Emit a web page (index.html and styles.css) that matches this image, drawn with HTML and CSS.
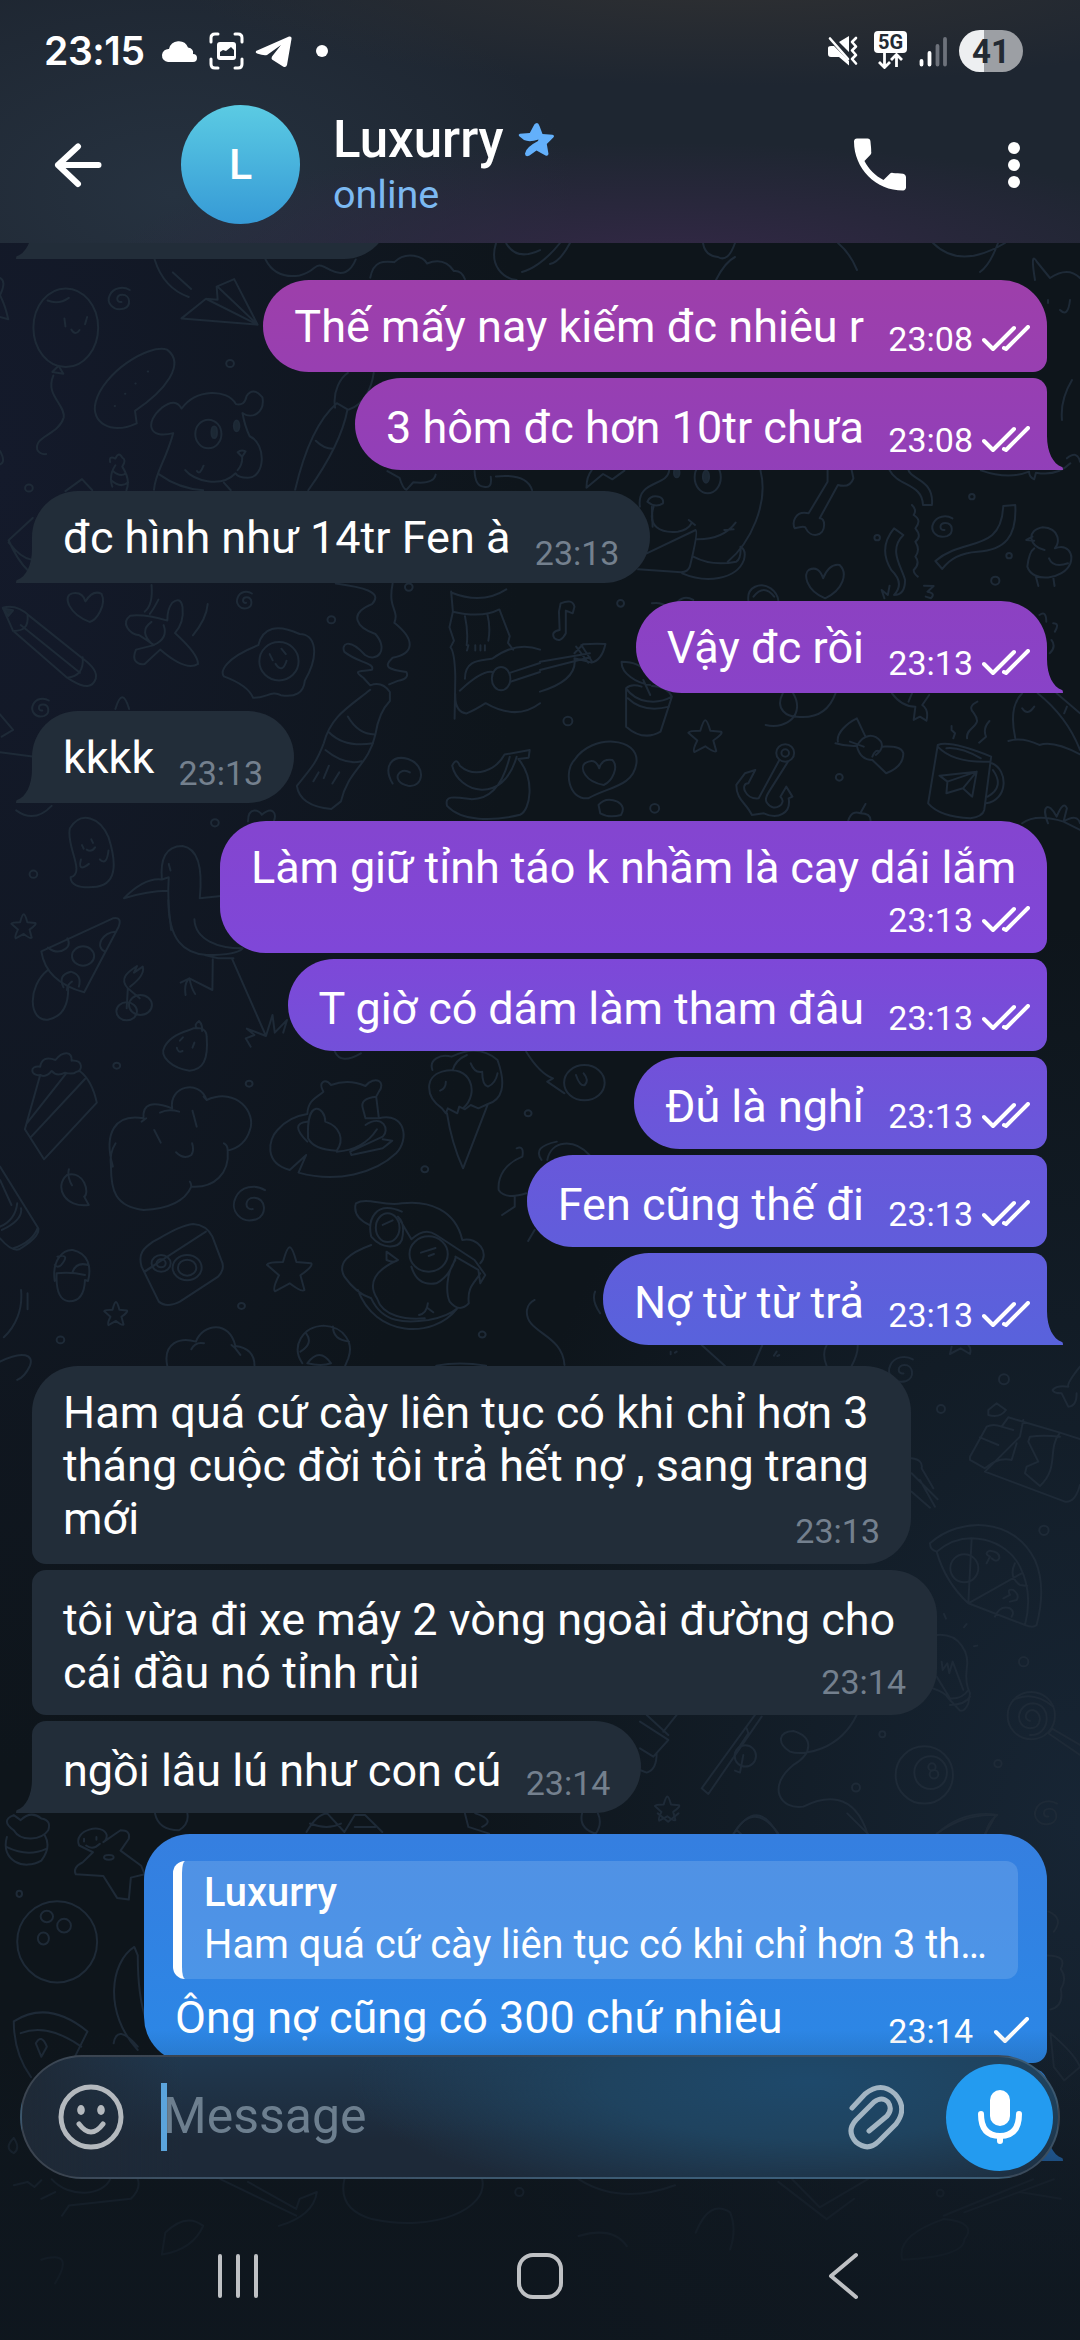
FILE: index.html
```html
<!DOCTYPE html>
<html lang="vi">
<head>
<meta charset="utf-8">
<title>Luxurry</title>
<link rel="stylesheet" href="styles.css">
</head>
<body>
<div class="screen">
  <svg class="wallpaper" viewBox="0 0 1080 2340" aria-hidden="true">
    <defs>
      <path id="star" vector-effect="non-scaling-stroke" d="M0-17Q2-17 5-6L16-5Q18-3 8 4L11 15Q9 17 0 10L-11 16Q-13 14-8 4L-17-4Q-16-6-5-6Q-2-17 0-17Z"/>
      <path id="swirl" d="M2 3C-5 4-5-6 3-6C13-6 14 8 5 11C-8 15-17 4-12-6C-8-15 4-17 12-12"/>
      <circle id="dot" r="4"/>
    </defs>
    <g transform="translate(0 230) scale(.3444 .4464)">
      <ellipse cx="191" cy="219" rx="94" ry="88"/>
      <path d="M138 158Q170 168 200 152M187 198L190 216M253 195L247 211M207 223Q219 238 231 224M152 318L170 304L184 322ZM155 326C130 370 190 390 185 420C170 460 100 460 108 492Q115 503 134 502"/>
      <path d="M527 198L598 154L632 156L629 127L680 110L748 212ZM598 154L748 212L632 127M449 66Q475 130 548 150M502 95L555 132M771 66Q800 110 870 102C930 90 905 65 960 90Q1010 110 1033 66M1075 107C1085 65 1120 70 1145 72C1180 45 1230 60 1240 75Q1290 60 1318 92Q1340 90 1350 110M1440 30C1420 80 1460 108 1500 112M1470 30Q1500 70 1568 45M0 107Q20 115 0 146Q15 168 24 200L0 195M0 495Q18 520 0 525"/>
      <path d="M397 433C320 460 262 430 278 385C300 320 430 255 485 268C540 300 480 360 392 405ZM429 317h1M393 344h1M363 367h1M333 394h1"/>
      <path d="M447 582C452 540 480 520 503 455C430 470 420 430 470 398Q510 375 527 400C570 355 660 355 685 390Q710 395 716 372Q735 350 762 375C770 410 730 425 704 410Q711 440 725 462C775 480 770 555 720 555Q690 555 684 545C640 580 560 560 538 538M461 547Q520 580 590 583M572 540Q580 550 591 528M690 498Q700 491 713 496L703 508ZM703 508Q705 525 690 538M650 566L670 583"/>
      <ellipse cx="605" cy="457" rx="38" ry="32"/><ellipse class="solid" cx="622" cy="453" rx="8" ry="13"/><ellipse class="solid" cx="687" cy="439" rx="8" ry="12"/>
      <path d="M320 520Q315 505 335 512Q345 495 355 510Q368 515 355 530Q380 560 367 583M335 527Q315 550 326 575M328 540Q350 555 365 545M322 560Q350 580 372 565M190 585L238 558L268 583M95 645L25 695Q50 740 84 765M25 700Q60 735 90 738"/>
      <path d="M857 582Q900 440 978 388L1009 402Q990 480 895 583M917 472Q940 490 967 490M973 398C965 360 990 330 1010 320M1013 402C1060 390 1080 350 1085 320M1125 540L1160 555Q1170 580 1180 582L1200 565Q1260 570 1265 548M1378 540Q1380 575 1405 575Q1430 580 1425 553M1440 552Q1530 545 1545 583"/>
      <path d="M8 846Q50 838 86 865L240 960Q285 985 278 1005Q265 1035 210 1010L195 1003L38 898ZM37 898Q85 900 80 863M60 885L232 992M195 1003Q245 1000 240 957"/><path class="solid" d="M9 848L38 852L24 865Z"/>
      <path d="M260 878C200 860 180 820 210 814Q240 810 248 832Q270 805 295 815C310 840 280 875 260 878ZM378 864C350 880 375 905 405 908Q430 920 447 930L395 940C380 965 400 975 420 972L465 940Q540 990 575 972Q575 950 508 903Q535 880 530 845Q525 820 500 835Q485 850 486 875Q420 860 378 864ZM440 878Q400 900 445 930Q490 915 475 885M420 855Q445 840 440 795M435 860Q445 850 460 828M560 908Q600 870 603 838"/>
      <path d="M750 930C650 960 640 990 650 1000Q720 1020 735 1048C770 1050 790 1030 815 1042Q880 1050 885 1010C930 950 915 905 870 905Q770 870 750 930Z"/><ellipse cx="810" cy="966" rx="57" ry="43"/><path d="M783 950L792 964M817 938L830 950M800 972Q820 995 832 965"/>
      <path d="M975 792C1050 800 1115 810 1080 838C1010 860 1035 890 1090 905C1130 940 1095 970 1060 952C1010 910 990 930 1000 945C1040 970 1090 970 1080 985C1050 990 1020 985 1055 1003L1075 1020Q1110 1010 1132 1035V1055Q1100 1080 1090 1130C1070 1200 1010 1210 990 1280L962 1297Q870 1290 862 1245C910 1200 920 1190 940 1150C960 1090 1010 1070 1075 1030M1140 792C1125 850 1160 850 1145 880C1210 920 1200 950 1140 958C1110 980 1130 985 1180 990Q1190 1005 1155 1010L1130 1018M1010 1090Q1040 1130 1088 1130M955 1125Q1000 1160 1083 1150M945 1165Q1000 1200 1050 1190M925 1215L910 1235M955 1200L940 1228M985 1215L965 1240"/>
      <path d="M1310 810L1315 855L1305 890L1318 920L1308 935Q1320 945 1322 1000L1320 1095M1315 855Q1400 870 1450 850L1465 880L1480 910L1475 925L1490 940M1310 812Q1400 840 1470 805M1350 865Q1360 900 1355 930M1415 860Q1425 890 1418 920M1360 930l-4 12M1380 930v12M1395 930v12M1408 930v12M1322 1040Q1320 1080 1355 1083Q1380 1075 1410 1060Q1500 1100 1568 1060M1350 1005C1350 960 1400 965 1430 960Q1500 920 1568 940M1335 1032Q1400 985 1430 990M1480 992L1568 970M1482 1012L1568 990"/>
      <ellipse cx="1455" cy="1005" rx="27" ry="26"/>
      <path d="M1313 1200Q1325 1180 1335 1200C1380 1230 1440 1210 1465 1175L1538 1165L1535 1182L1505 1185C1555 1230 1540 1300 1510 1310C1430 1325 1340 1325 1298 1290C1290 1265 1320 1270 1370 1275Q1450 1275 1480 1180M1313 1200C1330 1260 1460 1290 1500 1180M1140 1240C1110 1200 1140 1175 1185 1185C1240 1200 1230 1250 1185 1245C1130 1235 1160 1200 1190 1215"/>
      <path d="M205 1450C250 1440 190 1380 203 1340C235 1300 290 1315 315 1360C340 1420 340 1470 270 1472Q205 1475 205 1450ZM265 1365l5 8M238 1378l5 8M252 1388Q265 1395 276 1383M235 1410Q225 1440 258 1420M290 1410Q310 1425 315 1390M0 1085L38 1120L5 1135M0 1170Q50 1175 100 1180M47 1300Q100 1330 150 1290M335 1073Q355 1020 375 1073M720 1325C720 1290 755 1300 760 1310C790 1290 805 1305 795 1325"/>
      <path d="M360 1497Q420 1450 470 1455C465 1410 480 1380 530 1380C570 1385 590 1420 580 1497L642 1492M360 1497Q430 1480 487 1480M470 1455L490 1450Q485 1500 497 1568M490 1420l5 15"/>
      <use href="#dot" transform="translate(668 299) scale(2.8 2)"/><use href="#dot" transform="translate(84 578) scale(2.8 2)"/><use href="#dot" transform="translate(962 873) scale(2.8 2)"/><use href="#dot" transform="translate(1187 800) scale(2.8 2)"/><use href="#dot" transform="translate(624 1328) scale(2.8 2)"/><use href="#dot" transform="translate(97 1443) scale(2.8 2)"/>
      <use href="#swirl" transform="translate(348 156) scale(2.4 1.8)"/><use href="#swirl" transform="translate(711 831) scale(1.7 1.4)"/><use href="#swirl" transform="translate(119 1072) scale(1.9 1.5)"/>
    </g>
    <g transform="translate(0 900) scale(.3827 .3333)">
      <path d="M108 154L295 55Q320 50 310 80L220 277Q120 245 108 154ZM125 143Q150 165 172 146Q185 135 176 115M302 95C270 95 245 140 275 155M125 210C70 260 75 365 125 359C165 350 180 310 178 258"/><circle cx="217" cy="168" r="29"/><path d="M166 262Q150 225 185 215Q215 225 206 260M175 270Q175 255 188 245"/>
      <circle cx="331" cy="334" r="27"/><circle cx="367" cy="315" r="30"/><path d="M331 325L334 265L365 295M334 265C310 235 335 215 358 198L350 218L373 200Q380 225 340 260"/>
      <path d="M440 0C440 120 480 160 540 165Q620 165 634 145C570 145 510 120 508 58M535 165L570 175L610 175M556 178L555 270L495 235L472 248M495 235Q480 250 485 285M495 235Q500 265 510 282M607 178L695 408L712 345L718 398L750 360L740 398M695 408L645 386L665 405L642 415L655 440"/>
      <path d="M430 440C450 400 490 395 505 385Q540 380 540 410C545 480 530 510 495 512C450 505 415 470 430 440ZM515 385Q505 375 520 363Q530 375 528 393M478 412l-8 10M508 428l-5 15M462 443Q465 460 477 453"/>
      <path d="M105 525L65 688L115 778L253 608Q240 540 208 513M105 525C80 530 75 495 105 500Q110 465 145 480C165 450 190 455 187 482C220 480 215 515 200 515Q190 525 170 518C150 530 140 520 135 513Q120 535 105 525M70 670L172 522M80 712L222 537"/>
      <path d="M295 800C270 700 300 640 375 655Q370 590 450 625C440 560 520 535 540 600C620 560 670 640 653 690Q640 740 595 752C600 820 560 865 500 860Q475 925 375 930C300 920 290 870 290 800Q285 760 302 730M382 655L370 665M418 638Q440 625 468 635M403 690L420 728M503 632L514 680M460 757Q480 780 500 765Q508 750 502 730M540 600L532 590M595 752Q595 735 585 730M500 860Q500 850 496 845"/>
      <path d="M0 800L100 985Q105 1010 50 1048Q30 1055 0 1015M0 840L30 915M45 910Q40 960 0 980M55 925Q60 960 5 990M98 985Q85 1025 35 1045M180 808Q175 830 188 856M175 825C220 810 235 880 220 890L232 915C170 925 140 860 175 825"/>
      <path d="M143 1143C135 1080 165 1048 190 1050C230 1060 240 1100 230 1143L222 1140Q220 1205 180 1204Q145 1200 148 1120Q185 1115 222 1125M190 1115Q200 1085 230 1095M150 1070Q185 1060 160 1095Q150 1105 143 1095M55 1170C60 1230 40 1280 10 1312M72 1180V1228M0 1385C60 1350 90 1365 78 1398Q65 1430 45 1440"/>
      <path d="M370 1100C360 1060 375 1045 400 1025C440 1000 475 975 505 972Q540 975 555 1010L578 1080Q590 1105 570 1130L470 1205Q435 1225 415 1205ZM378 1114L538 995M380 1114L405 1095"/><circle cx="421" cy="1090" r="25"/><circle cx="421" cy="1090" r="12"/><circle cx="489" cy="1103" r="38"/><circle cx="489" cy="1103" r="24"/>
      <path d="M845 575C830 545 850 535 865 555Q910 535 955 558C980 525 1010 545 990 575L983 590L990 655C1060 635 1070 720 1035 760C980 820 880 850 780 818L800 765L757 810C690 790 700 720 725 690Q755 650 803 642C805 600 825 595 845 575ZM805 715C800 590 850 620 850 665C890 680 900 720 880 752Q820 750 805 715ZM983 590Q940 595 948 625L955 655H990M880 755Q950 750 985 688M955 675C1000 640 1020 690 1000 710L915 755L918 765L1000 745L1025 722L1000 718M803 665Q755 670 803 725"/>
      <path d="M1130 510C1120 480 1150 460 1180 470Q1250 430 1300 480C1325 560 1310 600 1275 612L1250 625L1230 615L1215 628L1200 620L1195 640L1170 625L1165 640L1155 625C1110 590 1110 530 1155 515C1230 490 1255 580 1210 625M1168 640Q1180 730 1210 805L1275 612M1183 510Q1190 480 1220 465M1230 490Q1240 520 1260 515Q1260 555 1275 560Q1295 550 1300 520M1150 572Q1165 565 1165 545M1375 455Q1410 520 1445 535L1430 545L1475 580M875 455Q890 495 943 460"/>
      <path d="M965 975Q920 950 930 910C960 890 1000 920 1050 910C1120 900 1190 930 1208 1020C1250 1010 1280 1060 1255 1090M1050 935C980 900 960 960 970 1010C1000 1050 1040 1045 1050 1020Q1060 970 1040 950L1075 1018Q1110 980 1140 1005L1240 1080L1268 1125L1255 1150L1250 1110L1190 1070M970 1035C910 1060 880 1090 900 1130Q930 1180 970 1195C1000 1270 1060 1270 1120 1260Q1170 1250 1195 1225M1040 1080C980 1110 960 1150 985 1195C1000 1250 1060 1260 1110 1255M935 1170C980 1310 1130 1320 1195 1225M1190 1080C1165 1120 1165 1180 1175 1205Q1200 1240 1225 1210C1220 1160 1240 1150 1255 1120M1010 1055L1040 1080Q1030 1090 1010 1080ZM1075 1100Q1090 1160 1140 1150Q1175 1130 1190 1075M1118 1210Q1115 1240 1095 1245M1118 1225L1132 1237"/>
      <ellipse cx="1120" cy="1062" rx="50" ry="53"/><ellipse cx="1013" cy="983" rx="31" ry="43"/><path d="M1100 1058l38-14M1000 975l26-14M1120 1068l14-6"/>
      <path d="M1430 780C1440 720 1500 715 1540 765M1415 780Q1390 740 1455 725M1350 745Q1370 735 1365 770C1320 790 1300 830 1303 870Q1320 900 1375 880M1345 890V920L1312 945M1380 1023L1397 990M1475 1395C1470 1300 1370 1300 1377 1230Q1380 1210 1397 1200M1140 1397Q1200 1385 1270 1397M1555 1175Q1545 1200 1568 1240"/>
      <path d="M437 1397C425 1330 470 1310 512 1325C530 1270 600 1260 615 1338Q665 1345 665 1397M500 1348Q510 1325 533 1330M605 1335L615 1345L628 1365M790 1390C760 1340 790 1280 845 1277C900 1280 925 1330 910 1375L902 1397M800 1300Q820 1330 785 1355M870 1280Q870 1320 912 1325M803 1390Q835 1340 865 1390Q840 1400 803 1390"/>
      <circle cx="1527" cy="548" r="53"/><path d="M1505 525Q1515 560 1528 555Q1540 540 1525 520"/>
      <use href="#star" transform="translate(62 80) scale(1.9 2.2)"/><use href="#star" transform="translate(757 1110) scale(3.5 4)"/><use href="#star" transform="translate(303 1242) scale(1.8 2.1)"/>
      <use href="#swirl" transform="translate(654 916) scale(3.2 3.8)"/>
      <g><circle cx="305" cy="497" r="9"/><circle cx="651" cy="551" r="9"/><circle cx="1110" cy="808" r="9"/><circle cx="631" cy="1218" r="9"/><circle cx="158" cy="1320" r="10"/><circle cx="1260" cy="1304" r="9"/><circle cx="1380" cy="640" r="9"/></g>
    </g>
    <g transform="translate(540 440) scale(.3444 .3333)">
      <path d="M135 143Q135 110 150 91M135 143L183 102L210 118L245 92M375 91C370 140 280 120 290 200M330 200C310 260 350 280 400 275Q430 270 440 250M432 240L450 255M640 91C665 190 610 310 545 365M453 298Q530 300 568 248M535 270L562 268M310 340L452 270Q460 275 435 380Q430 395 410 397L285 388M445 350Q500 380 570 365Q585 355 582 320Q600 330 592 360C570 420 480 430 413 400"/>
      <path d="M312 185Q320 165 345 170Q360 175 357 190Q335 205 312 185M325 200L327 260"/><ellipse cx="487" cy="112" rx="38" ry="48"/><ellipse class="solid" cx="482" cy="110" rx="9" ry="18"/><ellipse class="solid" cx="397" cy="98" rx="8" ry="14"/>
      <path d="M835 91V125L780 220C740 210 730 250 740 265Q770 255 772 265C785 295 825 290 825 255Q825 235 812 235L865 135Q900 145 910 115L905 91M1015 91C1040 140 1110 130 1112 195H1138C1145 120 1080 120 1070 91M1345 198L1380 195C1385 290 1350 330 1270 335Q1200 340 1168 387L1148 363C1230 290 1340 340 1345 198ZM1028 265L1055 285C1010 330 1050 380 1060 420Q1060 465 1028 465Q1060 430 1020 390C990 340 1000 300 1028 265ZM1080 195Q1095 210 1085 225Q1110 240 1090 265Q1110 290 1090 305Q1105 330 1090 350Q1105 370 1085 390Q1085 400 1097 410M1015 437L1010 465L992 450L1000 475M1115 437L1143 438L1125 455Q1150 460 1135 475L1120 470"/>
      <path d="M1465 330C1420 320 1410 270 1460 262C1510 265 1510 310 1495 325C1530 310 1550 340 1540 370C1520 420 1430 430 1415 380Q1420 335 1435 325M1435 302L1412 300L1430 290M1478 355Q1490 385 1533 370M1440 410L1447 438M1490 410L1494 438M1280 91Q1360 120 1420 95Q1420 110 1435 118L1440 98Q1500 110 1540 70M1530 55Q1560 30 1568 65"/>
      <path d="M828 475C770 450 765 400 780 390Q810 375 822 415Q840 370 870 375C895 400 880 450 828 475ZM605 482C600 440 640 425 670 445Q690 460 692 482M620 470Q650 430 680 470M55 515L60 490Q95 475 100 500L95 520L75 512V580Q60 610 42 595Q30 575 57 570ZM100 640L125 613Q160 610 190 612Q180 660 150 668L100 655Q110 720 0 755M0 665L145 640M0 690L145 652M105 620l35 48M120 615l30 48M325 490Q350 485 370 500M400 485Q420 465 445 480"/>
      <path d="M320 735C280 730 235 700 237 665Q290 665 310 700M320 765L300 720M250 745V860Q300 905 350 875L383 770Q370 740 325 738M250 745C280 790 340 795 383 770M255 775Q300 820 375 800M250 745Q265 730 295 740M705 760C680 810 720 830 745 830Q830 840 858 760M735 760C770 820 720 870 655 855M1022 760Q1050 800 1090 800L1085 840L1103 830L1122 842Q1130 810 1110 795L1130 765M1070 785L1080 760"/>
      <path d="M865 905C860 880 890 850 920 835L945 890M900 905L940 920M858 910Q890 920 920 918M920 918C940 880 970 880 990 905Q1000 925 975 945M920 918Q930 960 965 960L1005 1000Q1055 980 1055 940C1050 915 1010 920 995 920M965 950Q975 925 985 935"/>
      <circle cx="712" cy="939" r="26"/><circle cx="712" cy="939" r="11"/><path d="M695 960L635 1075C595 1080 580 1030 605 1030L625 990L595 1000L570 1035C570 1080 600 1090 615 1125L650 1120C690 1140 730 1120 722 1075L733 1070L715 1040L698 1070C720 1090 680 1120 660 1090Q650 1080 665 1055L720 965"/>
      <path d="M1155 915Q1190 900 1310 950L1290 1110Q1285 1130 1250 1135Q1160 1130 1127 1090ZM1155 920Q1200 970 1308 965M1180 925Q1220 920 1280 955M1312 970C1360 990 1360 1080 1295 1090M1315 990Q1350 1040 1300 1070M1160 1007L1268 995L1255 1070L1228 1045L1180 1060L1183 1025ZM1183 1025L1268 995L1228 1045M1200 895L1205 880L1195 870V858M1240 895C1235 860 1290 860 1260 820Q1240 800 1270 785M1275 908L1295 890Q1285 865 1305 843M1380 895Q1360 800 1400 760M1400 805Q1415 830 1435 800M1360 903Q1400 890 1450 915Q1490 900 1568 943M1445 760Q1530 830 1568 930M1530 800l-8 20M1568 820L1500 760"/>
      <path d="M140 1075C80 1080 70 990 100 960C150 880 290 890 280 970C270 1040 200 1040 140 1075ZM185 1035C130 1025 115 985 130 970Q160 950 172 985Q180 955 210 960C230 980 210 1025 185 1035ZM170 1095Q190 1070 225 1085Q250 1100 235 1125Q200 1135 175 1120ZM895 1142Q905 1110 930 1120L945 1092M930 1120Q960 1120 960 1142M1475 1150C1455 1100 1475 1080 1500 1130Q1520 1080 1530 1105L1520 1145Q1560 1120 1568 1150M1400 1150Q1440 1120 1520 1145L1568 1170M1450 525Q1470 510 1470 545M1490 550Q1510 550 1495 575M1480 640Q1500 620 1485 600"/>
      <use href="#swirl" transform="translate(1170 263) scale(2.3)"/><use href="#star" transform="translate(480 890) scale(2.9)"/>
      <circle cx="234" cy="490" r="10"/><circle cx="81" cy="843" r="13"/><circle cx="333" cy="1105" r="13"/><circle cx="869" cy="1012" r="10"/><circle cx="979" cy="293" r="8"/><circle cx="1254" cy="170" r="8"/><circle cx="1362" cy="347" r="8"/><circle cx="1322" cy="422" r="12"/>
    </g>
    <path d="M560 243C545 262 530 270 522 272M570 243Q560 262 550 264M703 243Q705 256 718 257Q728 263 735 243M735 257Q725 262 716 280M838 243Q850 253 857 270M933 243Q960 270 1005 243M998 243Q990 265 980 272M1035 280Q1030 250 1037 262L1050 278Q1068 266 1080 278M1048 300v3M1060 310Q1068 318 1070 300M1072 380Q1060 400 1062 420"/>
    <g transform="translate(640 1340) scale(.3333)">
      <path d="M185 15L255 78M340 78L367 15M560 78Q545 40 560 15M635 78Q655 40 653 15M92 35v8M105 38l5-3M410 35l-8 12M418 45l-6 3M930 42L935 20M930 42L962 25L990 42Q995 25 985 15M1320 80Q1280 130 1285 140Q1250 135 1238 150Q1240 160 1265 160L1285 200Q1310 200 1310 160"/>
      <path d="M1105 232L1260 278L1320 297M1105 232L1085 260Q1060 250 1040 260L990 350V360L1035 385M1085 260L1120 270M1150 240L1140 290L1035 395L1275 485Q1305 490 1320 435M1020 292L1075 315M1045 210L1070 190L1098 210Q1080 235 1045 225ZM1260 278C1220 330 1260 380 1200 438L1155 400L1160 380L1195 365L1165 305L1170 290Q1210 285 1260 290M1035 385Q1075 350 1115 360L1130 310"/>
      <path d="M870 610C960 530 1120 530 1185 660Q1220 740 1190 855Q1180 865 1155 855L985 790C920 730 900 670 890 635Q870 630 870 610ZM890 635C980 560 1100 600 1140 680Q1180 760 1155 855M995 598L985 790L1145 700M1065 830Q1080 795 1110 805Q1125 815 1115 830M1125 670Q1105 710 1140 735L1162 738M1040 670L1050 650Q1030 640 1050 632Q1080 635 1078 655Q1070 670 1055 655M1090 775L1110 765Q1100 745 1120 750Q1140 765 1130 780L1110 785"/><circle cx="973" cy="685" r="42"/>
      <path d="M892 885C960 880 990 940 980 990Q975 1030 990 1060L985 1090Q975 1115 960 1112L925 1075Q920 1060 878 1045M890 1010L930 1075M905 965L908 990L922 970L928 1000L938 965L970 1050M925 1075Q965 1080 985 1050M930 1095Q975 1095 990 1070M912 822l6 14M980 852l-8 10M1012 917l-10 2"/>
      <circle cx="1174" cy="1127" r="71"/><path d="M1170 1143C1150 1140 1155 1110 1180 1110C1210 1120 1205 1165 1170 1165C1120 1160 1130 1090 1180 1090C1240 1095 1230 1190 1170 1185M1120 1080Q1180 1050 1240 1100M1235 1165L1320 1215M1225 1180L1320 1245M1225 1180L1238 1165"/>
      <circle cx="853" cy="1305" r="86"/><circle cx="872" cy="1298" r="49"/><circle cx="876" cy="1281" r="11"/><circle cx="882" cy="1303" r="13"/>
      <path d="M650 1125C600 1230 490 1250 450 1235C410 1210 415 1175 460 1173C520 1190 520 1240 460 1275C380 1340 420 1410 490 1400C550 1370 640 1350 683 1482M281 1482Q350 1370 413 1482M290 1470Q295 1475 303 1482M890 1482Q970 1410 1072 1425Q1040 1450 1038 1482M345 1125L185 1345L205 1362L365 1130M320 1165L325 1180L285 1240M0 1145L85 1200L40 1250L0 1225M20 1125L85 1185M110 1125L70 1175M50 1240Q50 1290 20 1298L0 1290M815 355Q850 360 845 385L880 445M815 400L893 478M840 420L885 500M815 455L870 503"/><circle cx="316" cy="1248" r="32"/><path d="M310 1245L300 1298L285 1292"/>
      <use href="#swirl" transform="translate(785 92) scale(2.8)"/><use href="#swirl" transform="translate(1220 1422) scale(2.6)"/><use href="#star" transform="translate(82 1407) scale(2.2)"/>
      <circle cx="1092" cy="118" r="15"/><circle cx="903" cy="207" r="12"/><circle cx="1212" cy="571" r="14"/><circle cx="1151" cy="965" r="14"/><circle cx="727" cy="1183" r="9"/><circle cx="1074" cy="1271" r="11"/><circle cx="648" cy="1343" r="12"/>
    </g>
    <g transform="translate(0 1810) scale(.6888 .3381)">
      <path d="M20 60Q0 30 20 15L30 30Q45 0 60 25Q75 30 70 60C60 90 30 95 20 60M10 80C0 150 35 180 60 150Q75 110 65 75M10 110Q40 140 67 115M225 10Q230 60 260 60Q275 40 272 10M445 65C455 30 465 10 475 10L500 65M450 40Q475 60 495 40M500 65L515 15L530 15L555 65M515 50H545M675 10L680 50L710 70M690 10Q720 30 700 50M845 10Q840 55 865 70Q875 40 868 10M955 10L970 35L985 10M1065 70Q1095 -30 1130 70M1360 70Q1400 10 1445 15Q1440 40 1430 70M1230 10L1260 70"/>
      <path d="M115 105C105 60 150 35 155 75Q155 90 150 95L175 60Q190 60 187 85L175 120L205 165L210 190L190 200L187 265L170 260L150 195L110 190Q105 170 120 155L135 125Z"/><circle cx="158" cy="140" r="7"/><path d="M122 85v8M140 80v8M125 105Q135 120 145 100"/>
      <ellipse cx="83" cy="390" rx="58" ry="120"/><ellipse cx="68" cy="315" rx="9" ry="17"/><ellipse cx="93" cy="342" rx="10" ry="20"/><ellipse cx="63" cy="380" rx="8" ry="18"/>
      <path d="M20 625Q70 560 127 655L105 745M20 625Q20 720 45 790M30 660Q70 630 118 700M52 690Q60 660 68 700L60 730ZM165 690Q170 630 200 700M200 710C150 600 160 450 195 405L200 430Q200 550 212 620M1522 300Q1545 320 1530 360M1520 430Q1550 430 1540 470Q1550 500 1540 530Q1545 580 1525 590M1525 660Q1560 720 1568 760L1545 800L1530 760Z"/>
      <path d="M20 970Q5 1000 20 1015Q30 1000 20 970M20 1110L40 1100L50 1115L60 1095M75 1092C100 1150 150 1140 160 1092M60 1150L80 1130M90 1200L100 1170L190 1150Q205 1120 200 1092M320 1092L430 1200M360 1100L430 1180L435 1150L460 1130Q455 1200 405 1230M500 1092Q490 1180 540 1210C630 1250 710 1180 700 1092M840 1092Q900 1170 980 1110M1150 1092L1190 1175L1260 1092M1130 1100L1200 1210L1240 1150M1370 1200L1500 1092M1400 1190L1530 1092M1480 1130L1540 1150M240 1250Q270 1190 295 1230Q280 1300 235 1315ZM1010 1250Q1030 1150 1060 1190Q1070 1240 1060 1300M1310 1330Q1300 1260 1370 1210Q1420 1220 1400 1270Q1400 1320 1310 1330M840 1260Q890 1230 910 1290M60 1330Q110 1300 80 1400"/>
      <ellipse cx="754" cy="1130" rx="6" ry="12"/><ellipse cx="28" cy="248" rx="4" ry="9"/><ellipse cx="1365" cy="1133" rx="5" ry="10"/>
    </g>
  </svg>

  <header class="header">
    <div class="status">
      <span class="clock">23:15</span>
      <svg class="st-cloud" viewBox="161 40 37 22" width="37" height="22"><path fill="#fff" d="M168 62a6.500 6.500 0 0 1 1-13a10 10 0 0 1 19-1.500q6 1 5 6.500a4 4 0 0 1 0 8z"/></svg>
      <svg class="st-shot" viewBox="208 33 37 38" width="37" height="38"><g fill="none" stroke="#fff" stroke-width="3" stroke-linecap="round"><path d="M211 43v-4q0-4 4-4h3M235 35h3q4 0 4 4v4M242 60v5q0 4-4 4h-3M218 69h-3q-4 0-4-4v-5"/></g><rect x="217" y="43" width="19" height="18" rx="3" fill="#fff"/><path fill="#202a35" d="M220 57v-4l3-2 3 1 5-4 3 3v6z"/></svg>
      <svg class="st-plane" viewBox="255 36 38 33" width="38" height="33"><path fill="#fff" d="M256 52L289 37.500q3-.5 2.500 2.500L287 66q-1 3-4 1.500L272 60.500q-1-1 0-3L281 46L267 56Q264 57 257 54.500Q255 53.500 256 52z"/></svg>
      <i class="st-dot"></i>
      <svg class="st-mute" viewBox="827 36 31 31" width="31" height="31"><path fill="#fff" d="M828 48q0-2 3-2h3l15 15v4.500L839 57h-8q-3 0-3-3zM839 42l10-6v16z"/><path d="M830 38.500L848 59M856 38l-4 4 4 4.500-4 4 4 4.500-4 4 4 4.500" fill="none" stroke="#fff" stroke-width="2.600" stroke-linecap="round" stroke-linejoin="round"/></svg>
      <div class="net"><span>5G</span><svg viewBox="0 0 33 16" width="33" height="16"><path d="M10.500 0v14M5 9l5.500 5.500L16 9M22.500 14V2M17 7l5.500-5.500L28 7" fill="none" stroke="#fff" stroke-width="2.800"/></svg></div>
      <svg class="st-signal" viewBox="919 35 29 31" width="29" height="31"><path d="M921.500 60v3.500M929.500 52v11.500" stroke="#fff" stroke-width="3.800" stroke-linecap="round"/><path d="M937.500 45v18.500M945 38v25.500" stroke="#6d727b" stroke-width="3.800" stroke-linecap="round"/></svg>
      <span class="battery">41</span>
    </div>
    <div class="appbar">
      <svg class="back" viewBox="54 141 48 46" width="48" height="46"><path d="M98.500 164H58M78 145.500L58 164l20 19" fill="none" stroke="#fff" stroke-width="6" stroke-linecap="round" stroke-linejoin="round"/></svg>
      <div class="avatar">L</div>
      <div class="who">
        <div class="name">Luxurry<svg viewBox="518 119 38 37" width="38" height="37"><path fill="#63b0fb" d="M537 121q1.500 0 2.500 3l3 8 10 .7q2.500.8.8 2.800l-6.500 6.500 1.700 10q-.5 2.500-3 1.500l-9-5-7 5q-4.500 2-4.500-2 .5-6 13-12.500l.5-1.500q-9 3-14.500.5l-5-4q-1-1.500.8-2.300l10-.7 4.500-8.500q1-1.500 2.700-1.500z"/></svg></div>
        <div class="presence">online</div>
      </div>
      <svg class="call" viewBox="3 3 18 18" width="52" height="53"><path fill="#fff" d="M6.620 10.790c1.440 2.830 3.760 5.140 6.590 6.590l2.200-2.200c.27-.27.67-.36 1.020-.24 1.120.12 2.330.05 3.570.25.550.2 1 .650 1 1.200V20c0 .55-.45 1-1 1C10.610 21 3 13.390 3 4c0-.55.45-1 1-1h3.700c.55 0 1 .45 1 1 .1 1.250 .3 2.450.25 3.570.11.35.03.74-.25 1.020z"/></svg>
      <div class="more"><i></i><i></i><i></i></div>
    </div>
  </header>

  <main class="thread">
    <div class="msg in cut tail"></div>
    <div class="msg out top"><p>Thế mấy nay kiếm đc nhiêu r</p><span class="meta">23:08<svg><use href="#read"/></svg></span></div>
    <div class="msg out end tail"><p>3 hôm đc hơn 10tr chưa</p><span class="meta">23:08<svg><use href="#read"/></svg></span></div>
    <div class="msg in solo tail"><p>đc hình như 14tr Fen à</p><span class="meta">23:13</span></div>
    <div class="msg out solo tail"><p>Vậy đc rồi</p><span class="meta">23:13<svg><use href="#read"/></svg></span></div>
    <div class="msg in solo tail"><p>kkkk</p><span class="meta">23:13</span></div>
    <div class="msg out top full drop"><p>Làm giữ tỉnh táo k nhầm là cay dái lắm</p><span class="meta">23:13<svg><use href="#read"/></svg></span></div>
    <div class="msg out mid snug"><p>T giờ có dám làm tham đâu</p><span class="meta">23:13<svg><use href="#read"/></svg></span></div>
    <div class="msg out mid"><p>Đủ là nghỉ</p><span class="meta">23:13<svg><use href="#read"/></svg></span></div>
    <div class="msg out mid"><p>Fen cũng thế đi</p><span class="meta">23:13<svg><use href="#read"/></svg></span></div>
    <div class="msg out end tail"><p>Nợ từ từ trả</p><span class="meta">23:13<svg><use href="#read"/></svg></span></div>
    <div class="msg in top full wide3"><p>Ham quá cứ cày liên tục có khi chỉ hơn 3<br>tháng cuộc đời tôi trả hết nợ , sang trang<br>mới</p><span class="meta">23:13</span></div>
    <div class="msg in mid full wide2"><p>tôi vừa đi xe máy 2 vòng ngoài đường cho<br>cái đầu nó tỉnh rùi</p><span class="meta">23:14</span></div>
    <div class="msg in end tail"><p>ngồi lâu lú như con cú</p><span class="meta">23:14</span></div>
    <div class="msg out top full reply">
      <div class="quote"><b>Luxurry</b><span>Ham quá cứ cày liên tục có khi chỉ hơn 3 th…</span></div>
      <p>Ông nợ cũng có 300 chứ nhiêu</p>
      <span class="meta sent">23:14<svg><use href="#sent"/></svg></span>
    </div>
    <div class="msg out end tail next"></div>
  </main>
  <div class="fade"></div>

  <footer class="dock">
    <div class="composer">
      <svg class="smile" viewBox="0 0 66 66" width="66" height="66"><g fill="none" stroke="#b4b9be" stroke-width="5" stroke-linecap="round"><circle cx="33" cy="33" r="30"/><path d="M21 40q12 16 24 0"/></g><g fill="#b4b9be"><ellipse cx="23" cy="26" rx="3.800" ry="5"/><ellipse cx="43" cy="26" rx="3.800" ry="5"/></g></svg>
      <div class="field"><span>Message</span></div>
      <svg class="clip" viewBox="0 0 56 66" width="56" height="66"><path d="M4 24L17 10Q33-3 47 10Q60 24 48 40L31 57Q20 68 8 58Q-2 47 8 36L26 18Q34 12 40 18Q45 25 39 32L21 47" fill="none" stroke="#a3b5c3" stroke-width="5" stroke-linecap="round" stroke-linejoin="round"/></svg>
      <div class="mic"><svg viewBox="0 0 44 54" width="44" height="54"><rect x="12" y="0" width="20" height="36" rx="10" fill="#fff"/><path d="M3 24Q3 46 22 46Q41 46 41 24M22 46v5" fill="none" stroke="#fff" stroke-width="6" stroke-linecap="round"/></svg></div>
    </div>
    <nav class="nav">
      <svg viewBox="0 0 44 48" width="44" height="48"><path d="M4 4v40M22 4v40M40 4v40"/></svg>
      <svg viewBox="0 0 48 48" width="48" height="48"><rect x="3" y="3" width="42" height="42" rx="14"/></svg>
      <svg viewBox="0 0 34 48" width="34" height="48"><path d="M30 3L5 24l25 21"/></svg>
    </nav>
  </footer>
  <svg class="defs" width="0" height="0"><defs>
    <g id="read" fill="none" stroke="#fff" stroke-width="4" stroke-linecap="round" stroke-linejoin="round"><path d="M2 15l9 9L32 3M22 23l2 1L46 2"/></g>
    <g id="sent" fill="none" stroke="#fff" stroke-width="4" stroke-linecap="round" stroke-linejoin="round"><path d="M14 15l9 9L45 2"/></g>
  </defs></svg>
</div>
</body>
</html>
```

FILE: styles.css
```css
* { box-sizing: border-box; }
body { margin: 0; background: #0e151b; }
.screen {
  position: relative;
  display: flex;
  flex-direction: column;
  width: 1080px;
  height: 2340px;
  overflow: hidden;
  color: #fff;
  font-family: Roboto, "Noto Sans", sans-serif;
  background:
    radial-gradient(ellipse 620px 900px at 100% 78%, #172534 0%, rgba(23, 37, 52, 0) 100%),
    radial-gradient(ellipse 520px 1300px at 0% 20%, #141a2b 0%, rgba(20, 26, 43, 0) 100%),
    #0e151b;
}
.wallpaper {
  position: absolute;
  inset: 0;
  width: 1080px;
  height: 2340px;
  fill: none;
  stroke: #1e2a37;
  stroke-width: 2px;
}
.wallpaper path, .wallpaper circle, .wallpaper ellipse { vector-effect: non-scaling-stroke; stroke-linecap: round; stroke-linejoin: round; }
.wallpaper .solid { fill: #1c2834; }
.defs { position: absolute; }

/* header */
.header {
  position: relative;
  height: 243px;
  flex: none;
  background:
    radial-gradient(ellipse 560px 120px at 62% 108%, #332846 0%, rgba(50, 40, 68, 0) 100%),
    radial-gradient(ellipse 560px 110px at 68% -10%, #2f3032 0%, rgba(46, 48, 51, 0) 100%),
    radial-gradient(ellipse 400px 240px at 16% 80%, #263240 0%, rgba(38, 50, 64, 0) 100%),
    #1e2631;
}
.status { display: flex; align-items: center; height: 102px; padding-left: 44px; }
.clock { width: 117px; font: 600 39px/44px Inter, sans-serif; letter-spacing: -.4px; }
.st-shot { margin-left: 10px; }
.st-plane { margin-left: 10px; }
.st-dot { width: 12px; height: 12px; margin-left: 23px; border-radius: 50%; background: #fff; }
.st-mute { margin-left: 499px; }
.net { display: flex; flex-direction: column; width: 33px; height: 39px; margin-left: 16px; margin-top: -1px; }
.net span { height: 22px; border-radius: 4px; background: #fff; color: #232a33; font: 700 20px/23px "Roboto", sans-serif; text-align: center; }
.st-signal { margin-left: 12px; }
.battery {
  width: 64px; height: 42px; margin-left: 11px; border-radius: 21px;
  background: linear-gradient(90deg, #edeff1 25px, #9c9fa4 25px);
  color: #232a33; font: 700 33px/43px Roboto, sans-serif; text-align: center;
}
.appbar { display: flex; align-items: center; height: 125px; padding-left: 54px; }
.avatar {
  width: 119px; height: 119px; margin-left: 79px; border-radius: 50%;
  background: linear-gradient(#5bcbe3, #369ad6);
  font-weight: 500; font-size: 43px; line-height: 119px; text-align: center;
}
.who { width: 516px; margin-left: 33px; }
.name { display: flex; align-items: center; height: 59px; font-weight: 500; font-size: 51px; line-height: 59px; }
.name svg { margin-left: 14px; }
.presence { margin-top: 1px; color: #7cb9f2; font-size: 39.500px; line-height: 50px; }
.call { margin-left: 5px; }
.more { display: flex; flex-direction: column; gap: 5px; margin-left: 102px; }
.more i { width: 12px; height: 12px; border-radius: 50%; background: #fff; }

/* messages */
.thread { position: relative; display: flex; flex-direction: column; height: 1936px; overflow: hidden; }
.msg {
  position: relative; display: grid; flex: none; align-content: start;
  min-height: 92px; margin-bottom: 6px; padding: 20px 31px 19px;
  border-radius: 46px; font-size: 45px; line-height: 53px;
}
.msg p { grid-area: 1 / 1; margin: 0; white-space: nowrap; }
.out {
  align-self: flex-end; margin-right: 33px;
  background: linear-gradient(#a23ea0 0, #9d3fab 290px, #923fb8 460px, #8a42c6 660px, #8445d0 830px, #7f47d8 950px, #6b56da 1120px, #5962dc 1340px, #357fe0 1840px, #2b87e6 2063px) fixed;
}
.out p { padding-right: 152px; }
.in { align-self: flex-start; margin-left: 32px; background: #222d39; }
.in p { padding-right: 109px; }
.msg.full p { padding-right: 0; }
.mid, .end { padding-top: 23px; padding-bottom: 16px; }
.tail { margin-bottom: 18px; }
.out.end, .in.end { margin-bottom: 21px; }
.out.top { border-bottom-right-radius: 14px; }
.out.mid { border-top-right-radius: 14px; border-bottom-right-radius: 14px; }
.out.end { border-top-right-radius: 14px; }
.in.top { border-bottom-left-radius: 14px; }
.in.mid { border-top-left-radius: 14px; border-bottom-left-radius: 14px; }
.in.end { border-top-left-radius: 14px; }
.out.tail { border-bottom-right-radius: 0; }
.in.tail { border-bottom-left-radius: 0; }
.tail::after { content: ""; position: absolute; bottom: 0; width: 17px; height: 34px; background: inherit; }
.out.tail::after { right: -16px; clip-path: path("M0 0H1C1 16 7 28 16 31Q17 31 17 34H0Z"); }
.in.tail::after { left: -16px; clip-path: path("M17 0H16C16 16 10 28 1 31Q0 31 0 34H17Z"); }
.meta {
  grid-area: 1 / 1; align-self: end; justify-self: end; display: flex;
  margin: 0 0 -6px; color: #74808e; font-size: 34px; line-height: 40px;
}
.top .meta { margin-bottom: -6px; }
.mid .meta { margin-bottom: -3px; }
.end .meta { margin-bottom: -6px; }
.solo .meta { margin-bottom: -9px; }
.out .meta { margin-right: -14px; color: #fff; }
.meta svg { width: 48px; height: 27px; margin: 6px 0 0 9px; }
.drop { padding-bottom: 59px; letter-spacing: -.12px; }
.drop .meta { margin-bottom: -46px; letter-spacing: 0; }
.snug p { letter-spacing: -.1px; }
.wide3 { width: 879px; }
.wide2 { width: 905px; }
.wide3 p { letter-spacing: .03px; }
.in.full .meta { margin-right: 0; }
.cut { width: 358px; min-height: 92px; margin-top: -76px; margin-bottom: 21px; }
.reply { width: 903px; height: 229px; padding: 27px 29px 0; }
.quote {
  display: flex; flex-direction: column; height: 118px; padding: 6px 0 0 22px; margin-bottom: 12px;
  border-left: 9px solid #fff; border-radius: 12px; background: rgba(255, 255, 255, .14);
  font-size: 39.800px; line-height: 52px; white-space: nowrap;
}
.quote b { font-weight: 500; }
.reply p { grid-area: 2 / 1; padding-left: 2px; }
.reply .meta { grid-area: 2 / 1; margin: 0 -12px -7px 0; }
.next { width: 420px; height: 92px; }
.fade {
  position: absolute; top: 2030px; left: 0; right: 0; bottom: 0;
  background: linear-gradient(rgba(15, 23, 31, 0) 0, rgba(15, 23, 31, .25) 60px, rgba(15, 23, 31, .5) 130px, rgba(15, 23, 31, .8) 260px);
}

/* composer and system navigation */
.dock { position: absolute; left: 0; right: 0; top: 2055px; height: 285px; display: flex; flex-direction: column; padding: 0 20px; }
.composer {
  display: flex; align-items: center; height: 124px; padding-left: 36px;
  border: 2px solid rgba(255, 255, 255, .13); border-radius: 62px;
  background:
    radial-gradient(ellipse 460px 130px at 76% 20%, #1e496b 0%, #1f435f 45%, rgba(31, 62, 88, 0) 100%),
    linear-gradient(90deg, rgba(30, 41, 54, 1) 0, rgba(30, 41, 54, 0) 160px),
    linear-gradient(#20384f, #1d2938 70%);
}
.field { width: 687px; height: 68px; margin-left: 37px; border-left: 6px solid #5ba4dc; color: #6d7f8f; font-size: 50px; line-height: 67px; }
.field span { margin-left: -4px; }
.clip { margin-right: 42px; }
.mic { display: flex; align-items: center; justify-content: center; width: 107px; height: 107px; border-radius: 50%; background: #239bf0; }
.nav { display: flex; align-items: center; height: 48px; margin-top: 73px; padding-left: 196px; fill: none; stroke: #bfc1c4; stroke-width: 4px; stroke-linecap: round; stroke-linejoin: round; }
.nav svg:nth-child(2) { margin-left: 256px; }
.nav svg:nth-child(3) { margin-left: 262px; }
```
